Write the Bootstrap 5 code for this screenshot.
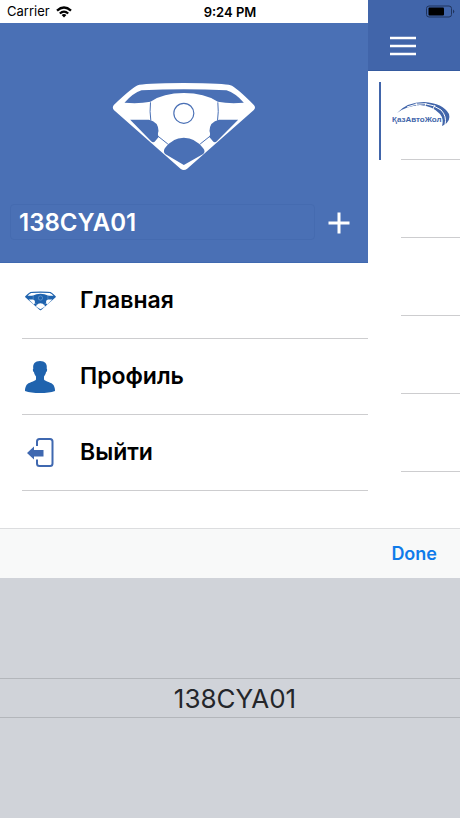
<!DOCTYPE html>
<html lang="ru">
<head>
<meta charset="utf-8">
<meta name="viewport" content="width=device-width, initial-scale=1">
<title>Меню</title>
<link href="https://cdn.jsdelivr.net/npm/bootstrap@5.3.0/dist/css/bootstrap.min.css" rel="stylesheet">
<style>
  body { font-family: Inter, "Liberation Sans", sans-serif; color: #000; background: #fff; }
  .drawer { width: 80%; }
  .status-bar { height: 23px; font-size: 13px; line-height: 23px; padding-left: 7px; gap: 6px; }
  .clock { left: 0; right: 0; top: 0; font-weight: 600; line-height: 24px; }
  .profile-head { background: #4a70b5; color: #fff; --seam: #4a70b5; padding: 60px 0 22px; border-bottom: 1px solid #3f69b0; }
  .emblem { width: 144px; height: 88px; }
  .plate-row { margin-top: 33px; padding: 0 5px 0 10px; }
  .plate-field { height: 36px; padding: 0 8px; font-size: 24px; line-height: 34px; font-weight: 600; color: #fff; background: transparent; border: 1px solid #456bb0; border-radius: 4px; }
  .plate-field:focus { color: #fff; background: transparent; box-shadow: none; border-color: #456bb0; }
  .add-btn { width: 48px; height: 36px; }
  .menu-list { padding-left: 22px; }
  .menu-link { height: 76px; font-size: 23px; font-weight: 600; color: #000; border-bottom: 1px solid #cdcdcf; gap: 22px; --seam: #fff; }
  .menu-icon { width: 36px; height: 36px; color: #1f63ae; }
  .page-head { height: 71px; background: #4165aa; padding: 5px 5px 2px 20px; border-bottom: 1px solid #355a9f; }
  .org-list { padding: 11px 0 0 11px; }
  .org-row { height: 78px; padding-left: 22px; }
  .org-row::after { content: ""; display: block; border-bottom: 1px solid #cdcdcf; }
  .org-row.current { border-left: 2px solid #4165aa; padding-left: 11px; }
  .org-row.current::after { margin-left: 9px; }
  .brand-name { font: bold 8px "Liberation Sans", sans-serif; }
  .key-bar { height: 50px; background: #f8f9f9; border-top: 1px solid #dcdddf; padding-right: 23px; }
  .done-btn { font-size: 18px; font-weight: 600; color: #0f7bea; }
  .picker { height: 240px; background: #d0d3d9; }
  .picker-item { height: 40px; padding-left: 10px; font-size: 26px; color: #24262a; border: solid #b3b6bb; border-width: 1px 0; }
</style>
<script src="https://cdn.jsdelivr.net/npm/bootstrap@5.3.0/dist/js/bootstrap.bundle.min.js"></script>
</head>
<body class="d-flex flex-column min-vh-100 position-relative">
<svg class="d-none" aria-hidden="true">
  <symbol id="wheel" viewBox="36 24 429 264">
    <path fill="currentColor" fill-rule="evenodd" d="M112 31Q125 25 250 24Q375 25 390 31Q405 35 460 90Q467 98 460 105L260 281Q250 289 240 281L40 105Q34 98 40 90Q96 37 112 31Z
      M123 46Q98 54 72 83Q115 87 150 80Q188 54 250 54Q312 54 352 80Q386 87 430 83Q404 54 378 46Q250 40 123 46Z
      M89 134L152 199Q159 205 165 197L175 185Q170 180 174 168Q174 140 145 134Z
      M413 134L349 199Q342 205 336 197L326 185Q331 180 327 168Q327 140 356 134Z
      M193 220Q187 230 194 237L250 270L308 237Q316 229 308 220Q285 188 250 188Q215 188 193 220Z"/>
    <path fill="none" stroke="var(--seam)" stroke-width="3" d="M150 82Q147 110 151 137M352 82Q355 110 351 137M173 184L202 207M328 184L299 207"/>
    <circle cx="250" cy="115" r="30" fill="none" stroke="var(--seam)" stroke-width="3.500"/>
  </symbol>
</svg>

<main class="d-flex flex-grow-1">
  <section class="drawer d-flex flex-column">
    <div class="status-bar d-flex align-items-center">
      <span>Carrier</span>
      <svg width="16" height="12" viewBox="0 0 16 12" aria-hidden="true">
        <g fill="none" stroke="#000" stroke-width="2.300"><path d="M1 4.600Q8-1.700 15 4.600M3.800 7.500Q8 3.700 12.200 7.500"/></g>
        <path d="M5.600 9Q8 7 10.400 9L8 11.500Z"/>
      </svg>
      <span class="clock position-absolute text-center">9:24 PM</span>
    </div>
    <header class="profile-head">
      <svg class="emblem d-block mx-auto" aria-hidden="true"><use href="#wheel"/></svg>
      <div class="plate-row d-flex align-items-center">
        <input class="plate-field form-control flex-grow-1" type="text" value="138CYA01" aria-label="Номер автомобиля">
        <button class="add-btn btn p-0 border-0 flex-shrink-0" type="button" aria-label="Добавить">
          <svg width="22" height="22" viewBox="0 0 22 22"><path d="M11 0.500V21.500M0.500 11H21.500" stroke="#fff" stroke-width="3"/></svg>
        </button>
      </div>
    </header>
    <nav class="menu-list">
      <a class="menu-link d-flex align-items-center text-decoration-none" href="#home">
        <svg class="menu-icon" viewBox="0 0 36 36" aria-hidden="true"><use href="#wheel" x="3" y="8" width="31" height="20"/></svg>
        <span>Главная</span>
      </a>
      <a class="menu-link d-flex align-items-center text-decoration-none" href="#profile">
        <svg class="menu-icon" viewBox="0 0 36 36" aria-hidden="true"><path fill="currentColor" d="M18 2C13 2 10.500 5 11.300 9.500C10.500 10 10.800 12.500 12 13.300C12.300 15 13 16.500 14 17.500V20.500C13 22.500 6 23.500 4.500 26C3.200 28.500 3 30 3 32Q9 34 18 34T33 32C33 30 32.800 28.500 31.500 26C30 23.500 23 22.500 22 20.500V17.500C23 16.500 23.700 15 24 13.300C25.200 12.500 25.500 10 24.700 9.500C25.500 5 23 2 18 2Z"/></svg>
        <span>Профиль</span>
      </a>
      <a class="menu-link d-flex align-items-center text-decoration-none" href="#logout">
        <svg class="menu-icon" viewBox="0 0 36 36" aria-hidden="true"><g fill="none" stroke="#3f68b0" stroke-width="2"><path d="M15 11V6.500Q15 4 17.500 4H28Q30.500 4 30.500 6.500V28.500Q30.500 31 28 31H17.500Q15 31 15 28.500V24.500"/></g><path fill="#3f68b0" d="M5 18L12 11.500V15H21.500V21.500H12V24.500Z"/></svg>
        <span>Выйти</span>
      </a>
    </nav>
  </section>

  <section class="flex-grow-1 overflow-hidden">
    <header class="page-head d-flex flex-column justify-content-between">
      <svg class="align-self-end" width="29" height="13" viewBox="0 0 29 13" role="img" aria-label="Заряд батареи"><rect x="0.500" y="1" width="25" height="11" rx="2.500" fill="none" stroke="#20345c"/><rect x="2.500" y="2.500" width="15.500" height="8" rx="1"/><path fill="#20345c" d="M27 4.500Q29.500 6.500 27 8.500Z"/></svg>
      <button class="btn border-0 p-0 pb-2 align-self-start lh-1" type="button" aria-label="Меню">
        <svg class="d-block mb-1" width="30" height="20" viewBox="0 0 30 20"><path d="M2 2H28M2 10H28M2 18H28" stroke="#fff" stroke-width="2.600"/></svg>
      </button>
    </header>
    <div class="org-list">
      <div class="org-row current d-flex flex-column justify-content-between">
        <svg class="mt-3" width="62" height="36" viewBox="0 0 62 36" role="img" aria-label="ҚазАвтоЖол">
          <path fill="#4165aa" d="M5 15Q15 4 32 4Q51 5 57 16Q59 23 52 27L50 28Q52 21 48 16Q41 8 28 7Q14 8 5 15Z"/>
          <path fill="none" stroke="#fff" stroke-width="1" d="M15 9Q34 1 49 12Q55 18 53 27M24 5L25 8M34 5L33 8M43 7L41 11"/>
          <text class="brand-name" x="0" y="24" fill="#4165aa">ҚазАвтоЖол</text>
        </svg>
      </div>
      <div class="org-row d-flex flex-column justify-content-end"></div>
      <div class="org-row d-flex flex-column justify-content-end"></div>
      <div class="org-row d-flex flex-column justify-content-end"></div>
      <div class="org-row d-flex flex-column justify-content-end"></div>
    </div>
  </section>
</main>

<div class="key-bar d-flex justify-content-end align-items-center">
  <button class="done-btn btn border-0 p-0" type="button">Done</button>
</div>
<div class="picker d-flex flex-column justify-content-center" role="listbox" aria-label="Номер автомобиля">
  <div class="picker-item d-flex align-items-center justify-content-center" role="option" aria-selected="true">138CYA01</div>
</div>
</body>
</html>
